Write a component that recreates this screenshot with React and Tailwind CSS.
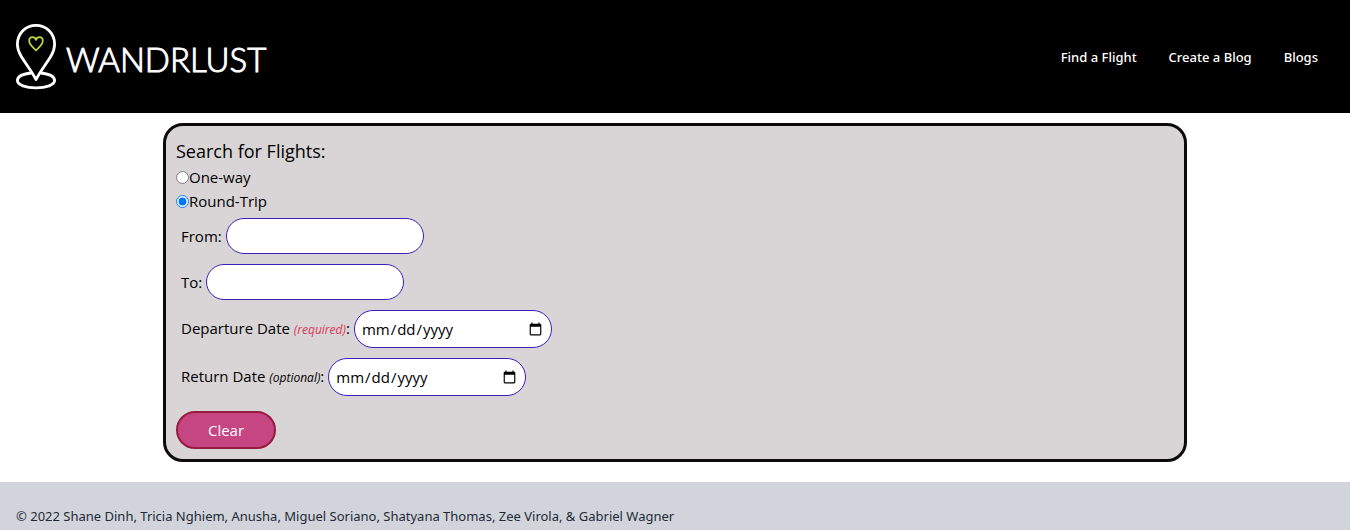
import { useState } from "react";

const links = ["Find a Flight", "Create a Blog", "Blogs"];

const fieldClass =
  "w-[198px] rounded-[20px] border border-[#3b1fb8] bg-white px-[6px] text-black";

function Logo() {
  return (
    <a href="#home" className="flex items-center gap-2 text-white">
      <svg
        viewBox="0 0 42 66"
        className="h-[66px] w-[42px]"
        fill="none"
        stroke="currentColor"
        strokeWidth="2.8"
        strokeLinejoin="round"
        strokeLinecap="round"
        aria-hidden="true"
      >
        <path d="M15 49C6 50 1.400 52.800 1.400 56.600C1.400 61 9.800 63.800 20 63.800S38.600 61 38.600 56.600C38.600 52.800 34 50 25 49" />
        <path d="M20 55.500C15.500 47 9.500 39.500 5 32C2.700 28.200 1.400 24.500 1.400 20.300C1.400 9.600 9.600 1.400 20 1.400S38.600 9.600 38.600 20.300C38.600 24.500 37.300 28.200 35 32C30.500 39.500 24.500 47 20 55.500Z" />
        <path
          stroke="#b6d43c"
          strokeWidth="1.800"
          d="M20 26.500C17.500 23.500 13.200 21 13.200 16.800C13.200 14.700 14.700 13.200 16.500 13.200C18.200 13.200 19.500 14.300 20 15.900C20.500 14.300 21.800 13.200 23.500 13.200C25.300 13.200 26.800 14.700 26.800 16.800C26.800 21 22.500 23.500 20 26.500Z"
        />
      </svg>
      <span className="pt-1 font-['Lato',sans-serif] text-[33px] leading-[40px] font-light [-webkit-text-stroke:1px_white]">
        WANDRLUST
      </span>
    </a>
  );
}

function Field({ id, label, note, noteClass, type, className, value, onChange }) {
  return (
    <div className="flex items-center gap-1 p-[5px]">
      <label htmlFor={id}>
        {label}
        {note && (
          <>
            {" "}
            <em className={noteClass}>({note})</em>
          </>
        )}
        :
      </label>
      <input
        id={id}
        type={type}
        value={value}
        onChange={onChange}
        className={className}
      />
    </div>
  );
}

export default function App() {
  const empty = { from: "", to: "", depart: "", back: "" };
  const [trip, setTrip] = useState("round");
  const [values, setValues] = useState(empty);
  const set = (key) => (e) => setValues({ ...values, [key]: e.target.value });

  return (
    <div className="bg-white font-['Open_Sans',sans-serif] text-[15px] leading-6 text-black">
      <header className="flex h-[113px] items-center justify-between bg-black px-4">
        <Logo />
        <nav className="flex gap-8 px-4 font-['Noto_Sans',sans-serif] text-[13px] font-medium text-white">
          {links.map((text) => (
            <a key={text} href="#nav">
              {text}
            </a>
          ))}
        </nav>
      </header>

      <main className="px-4 pt-[10px] pb-5">
        <form className="mx-auto max-w-5xl rounded-[20px] border-[3px] border-[#0d0a0c] bg-[#d9d5d6] p-[10px]">
          <h1 className="pt-px text-[18px] leading-7">Search for Flights:</h1>
          <label className="flex items-center">
            <input
              type="radio"
              name="trip"
              className="size-[13px]"
              checked={trip === "one"}
              onChange={() => setTrip("one")}
            />
            One-way
          </label>
          <label className="flex items-center">
            <input
              type="radio"
              name="trip"
              className="size-[13px]"
              checked={trip === "round"}
              onChange={() => setTrip("round")}
            />
            Round-Trip
          </label>

          <Field id="from" label="From" type="text" value={values.from} onChange={set("from")} className={`${fieldClass} h-9`} />
          <Field id="to" label="To" type="text" value={values.to} onChange={set("to")} className={`${fieldClass} h-9`} />
          <Field
            id="depart"
            label="Departure Date"
            note="required"
            noteClass="text-[12px] text-[#dc3558]"
            type="date"
            value={values.depart}
            onChange={set("depart")}
            className={`${fieldClass} h-[38px]`}
          />
          <Field
            id="back"
            label="Return Date"
            note="optional"
            noteClass="text-[12px]"
            type="date"
            value={values.back}
            onChange={set("back")}
            className={`${fieldClass} h-[38px]`}
          />

          <button
            type="button"
            onClick={() => setValues(empty)}
            className="mt-[10px] block h-[38px] w-[100px] rounded-[20px] border-2 border-[#971b3f] bg-[#c54683] text-white"
          >
            Clear
          </button>
        </form>
      </main>

      <footer className="bg-[#d1d5db] px-4 pt-[22px] pb-[22px] font-['Noto_Sans',sans-serif] text-[13px] text-[#1f2937]">
        © 2022 Shane Dinh, Tricia Nghiem, Anusha, Miguel Soriano, Shatyana Thomas, Zee Virola, &amp; Gabriel Wagner
      </footer>
    </div>
  );
}
